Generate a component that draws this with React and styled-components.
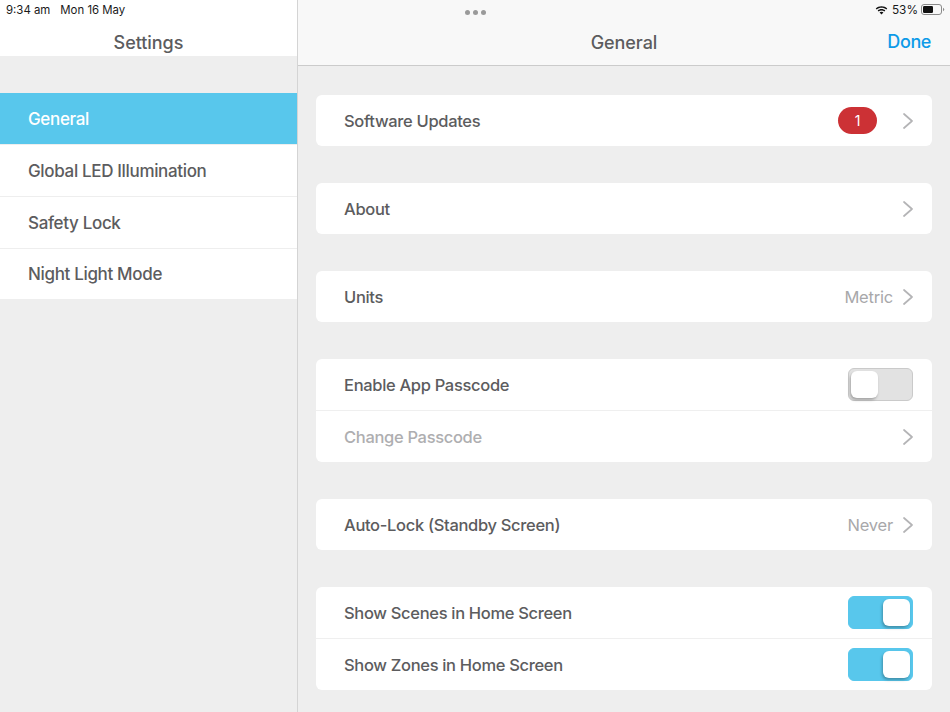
import React from "react";
import styled, { createGlobalStyle } from "styled-components";

const Global = createGlobalStyle`
  html, body { margin: 0; padding: 0; height: 100%; background: #eeeeee; }
  body { font-family: Inter, "Liberation Sans", sans-serif; -webkit-font-smoothing: antialiased; }
  #root { height: 100%; }
`;

const Page = styled.div`
  display: grid;
  grid-template-columns: 297px 1fr;
  width: 950px;
  height: 712px;
  overflow: hidden;
  background: #eeeeee;
  color: #5c5c5e;
`;

const Sidebar = styled.aside`
  display: flex;
  flex-direction: column;
`;

const SideHeader = styled.header`
  height: 56px;
  background: #ffffff;
  display: flex;
  flex-direction: column;
`;

const StatusLeft = styled.div`
  height: 19px;
  margin-bottom: 11px;
  padding: 1px 0 0 6px;
  box-sizing: border-box;
  display: flex;
  align-items: center;
  gap: 10px;
  font-size: 11.4px;
  color: #1a1a1a;
`;

const NavTitle = styled.h1`
  margin: 0;
  font-size: 18px;
  font-weight: 500;
  color: #5c5c5e;
  letter-spacing: -0.05px;
  line-height: 26px;
  text-align: center;
`;

const SideList = styled.nav`
  margin-top: 37px;
  display: flex;
  flex-direction: column;
`;

const SideItem = styled.div`
  height: ${(p) => (p.$last ? 50 : 51)}px;
  margin-bottom: ${(p) => (p.$last ? 0 : 1)}px;
  padding-left: 28px;
  display: flex;
  align-items: center;
  font-size: 17px;
  font-weight: 500;
  letter-spacing: -0.34px;
  background: ${(p) => (p.$active ? "#58c7ec" : "#ffffff")};
  color: ${(p) => (p.$active ? "#ffffff" : "#5c5c5e")};
`;

const Main = styled.main`
  border-left: 1px solid #d4d4d4;
  display: flex;
  flex-direction: column;
`;

const MainHeader = styled.header`
  height: 65px;
  flex: none;
  background: #f8f8f8;
  border-bottom: 1px solid #cbcbcb;
  display: flex;
  flex-direction: column;
`;

const StatusRight = styled.div`
  position: relative;
  height: 19px;
  padding-right: 5px;
  display: flex;
  align-items: center;
  justify-content: flex-end;
  font-size: 11.8px;
  color: #1a1a1a;
`;

const Dots = styled.div`
  position: absolute;
  left: 167px;
  top: 10px;
  display: flex;
  gap: 3px;
`;

const Dot = styled.span`
  width: 5px;
  height: 5px;
  border-radius: 50%;
  background: #9a9a9a;
`;

const Percent = styled.span`
  margin: 0 3px 0 4px;
`;

const NavBar = styled.div`
  display: grid;
  grid-template-columns: 80px 1fr 80px;
  align-items: center;
  box-sizing: border-box;
  height: 46px;
  padding: 2px 19px 0;
`;

const Done = styled.div`
  justify-self: end;
  margin-bottom: 4px;
  font-size: 18px;
  font-weight: 500;
  letter-spacing: -0.4px;
  color: #0d9be8;
`;

const Content = styled.div`
  padding: 29px 18px 0 18px;
  display: flex;
  flex-direction: column;
  gap: 37px;
`;

const Group = styled.section`
  background: #ffffff;
  border-radius: 6px;
  overflow: hidden;
`;

const Row = styled.div`
  height: 51px;
  padding: 0 19px 0 28px;
  display: flex;
  align-items: center;
  font-size: 16.5px;
  letter-spacing: -0.32px;
  font-weight: 500;
  & + & {
    height: 52px;
    border-top: 1px solid #efefef;
    box-sizing: border-box;
  }
`;

const Label = styled.span`
  flex: 1;
  color: ${(p) => (p.$muted ? "#aeaeb0" : "#5c5c5e")};
`;

const Value = styled.span`
  color: #a8a8aa;
  font-weight: 400;
  letter-spacing: -0.2px;
  margin-right: 10px;
`;

const Badge = styled.span`
  width: 39px;
  height: 27px;
  margin-right: 26px;
  border-radius: 14px;
  background: #cc3135;
  color: #ffffff;
  font-size: 14px;
  font-weight: 400;
  display: flex;
  align-items: center;
  justify-content: center;
`;

const Track = styled.div`
  width: 65px;
  height: 33px;
  box-sizing: border-box;
  border-radius: 6px;
  padding: 2px;
  display: flex;
  justify-content: ${(p) => (p.$on ? "flex-end" : "flex-start")};
  background: ${(p) => (p.$on ? "#58c7ec" : "#e2e2e2")};
  border: 1px solid ${(p) => (p.$on ? "#58c7ec" : "#cacaca")};
`;

const Knob = styled.div`
  width: 27px;
  height: 27px;
  border-radius: 6px;
  background: #ffffff;
  box-shadow: -1px 2px 3px rgba(0, 0, 0, 0.28);
`;

const ChevronSvg = styled.svg`
  width: 10px;
  height: 16px;
  flex: none;
  fill: none;
  stroke: #b4b4b6;
  stroke-width: 1.7;
  stroke-linecap: round;
  stroke-linejoin: round;
`;

const Chevron = () => (
  <ChevronSvg viewBox="0 0 10 16">
    <path d="M1 1 L9 8 L1 15" />
  </ChevronSvg>
);

const Wifi = () => (
  <svg width="13" height="10" viewBox="0 0 14 10">
    <path d="M7 1C4.6 1 2.4 1.9.8 3.4l1 1.1C3.2 3.2 5 2.5 7 2.5s3.8.7 5.2 2l1-1.1C11.6 1.9 9.4 1 7 1z" fill="#111" />
    <path d="M7 4C5.4 4 4 4.6 2.9 5.6l1 1.1C4.7 5.9 5.8 5.5 7 5.5s2.3.4 3.1 1.2l1-1.1C10 4.6 8.6 4 7 4z" fill="#111" />
    <path d="M7 6.8c-.9 0-1.6.3-2.1.8L7 9.9l2.1-2.3c-.5-.5-1.2-.8-2.1-.8z" fill="#111" />
  </svg>
);

const Battery = () => (
  <svg width="24" height="11" viewBox="0 0 24 11">
    <rect x="0.5" y="0.5" width="20" height="10" rx="2.5" fill="none" stroke="#8a8a8a" />
    <rect x="2" y="2" width="10" height="7" rx="1.2" fill="#111" />
    <path d="M22 3.8c.8.3 1.2.9 1.2 1.7s-.4 1.4-1.2 1.7z" fill="#8a8a8a" />
  </svg>
);

const Toggle = ({ on }) => (
  <Track $on={on}>
    <Knob />
  </Track>
);

export default function App() {
  return (
    <Page>
      <Global />
      <Sidebar>
        <SideHeader>
          <StatusLeft>
            <span>9:34 am</span>
            <span>Mon 16 May</span>
          </StatusLeft>
          <NavTitle>Settings</NavTitle>
        </SideHeader>
        <SideList>
          <SideItem $active>General</SideItem>
          <SideItem>Global LED Illumination</SideItem>
          <SideItem>Safety Lock</SideItem>
          <SideItem $last>Night Light Mode</SideItem>
        </SideList>
      </Sidebar>
      <Main>
        <MainHeader>
          <StatusRight>
            <Dots>
              <Dot />
              <Dot />
              <Dot />
            </Dots>
            <Wifi />
            <Percent>53%</Percent>
            <Battery />
          </StatusRight>
          <NavBar>
            <span />
            <NavTitle>General</NavTitle>
            <Done>Done</Done>
          </NavBar>
        </MainHeader>
        <Content>
          <Group>
            <Row>
              <Label>Software Updates</Label>
              <Badge>1</Badge>
              <Chevron />
            </Row>
          </Group>
          <Group>
            <Row>
              <Label>About</Label>
              <Chevron />
            </Row>
          </Group>
          <Group>
            <Row>
              <Label>Units</Label>
              <Value>Metric</Value>
              <Chevron />
            </Row>
          </Group>
          <Group>
            <Row>
              <Label>Enable App Passcode</Label>
              <Toggle />
            </Row>
            <Row>
              <Label $muted>Change Passcode</Label>
              <Chevron />
            </Row>
          </Group>
          <Group>
            <Row>
              <Label>Auto-Lock (Standby Screen)</Label>
              <Value>Never</Value>
              <Chevron />
            </Row>
          </Group>
          <Group>
            <Row>
              <Label>Show Scenes in Home Screen</Label>
              <Toggle on />
            </Row>
            <Row>
              <Label>Show Zones in Home Screen</Label>
              <Toggle on />
            </Row>
          </Group>
        </Content>
      </Main>
    </Page>
  );
}
